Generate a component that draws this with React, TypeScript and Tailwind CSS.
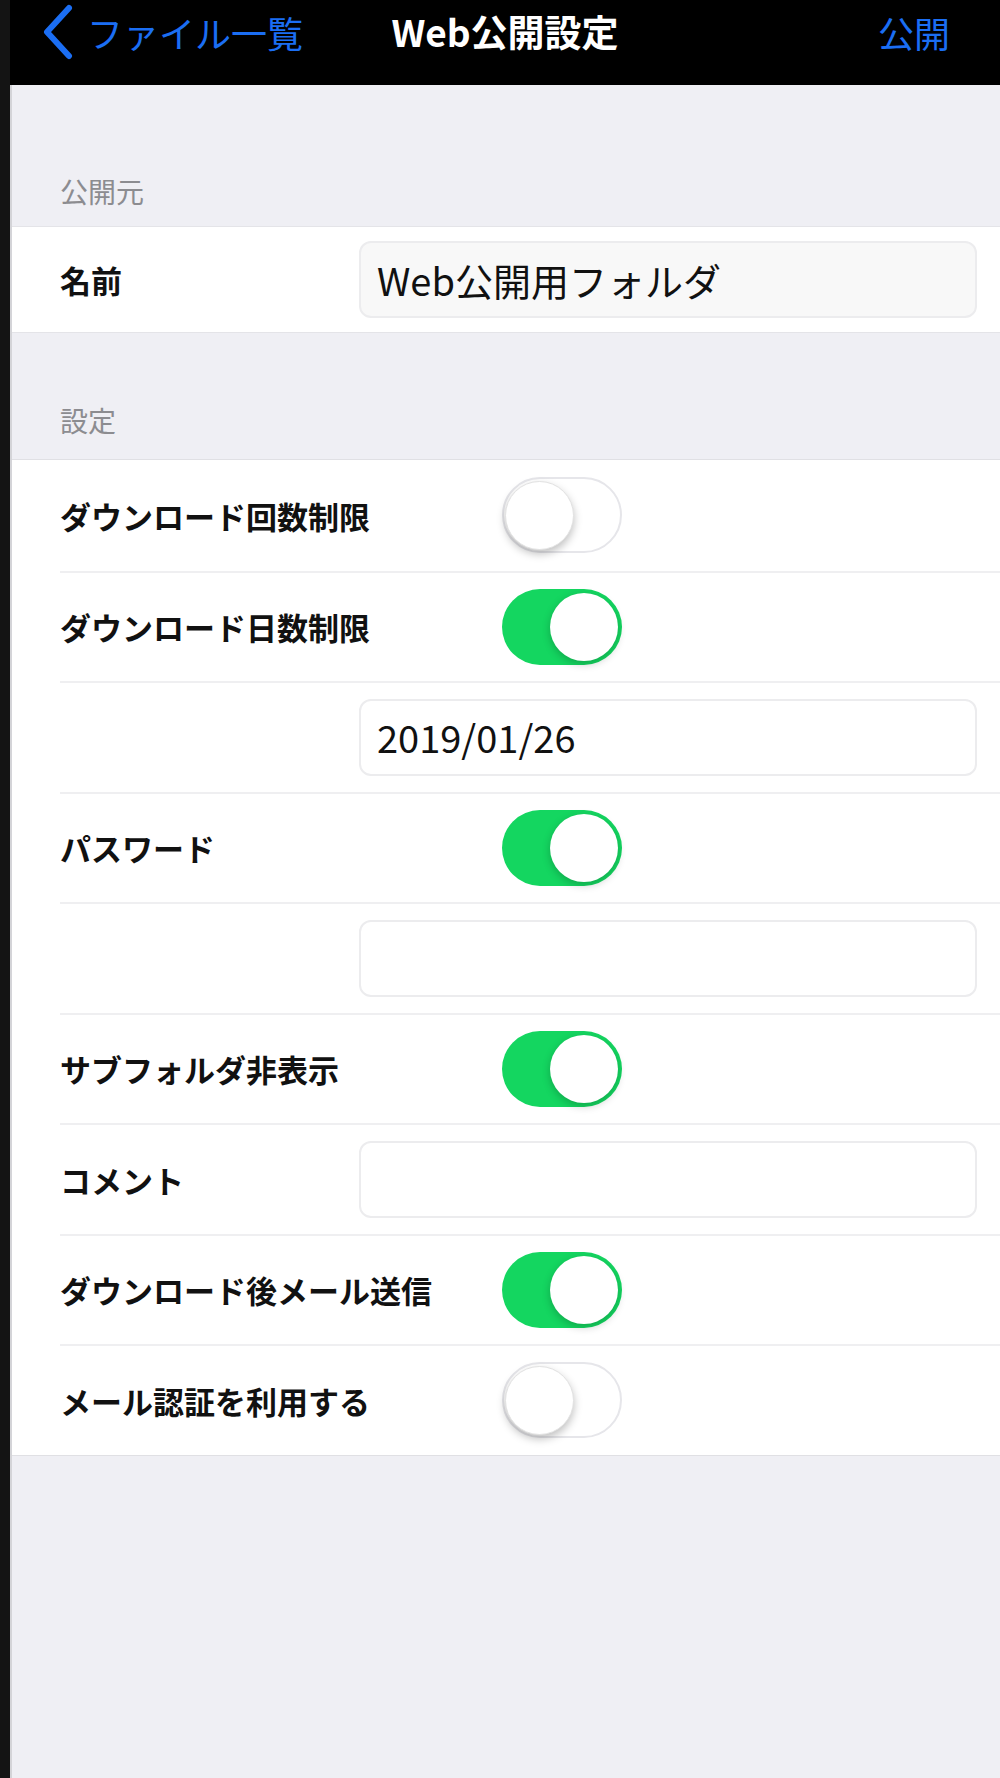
import React from 'react'

type Row =
  | { kind: 'toggle'; label: string; on: boolean }
  | { kind: 'input'; label: string; value: string }

const settingRows: Row[] = [
  { kind: 'toggle', label: 'ダウンロード回数制限', on: false },
  { kind: 'toggle', label: 'ダウンロード日数制限', on: true },
  { kind: 'input', label: '', value: '2019/01/26' },
  { kind: 'toggle', label: 'パスワード', on: true },
  { kind: 'input', label: '', value: '' },
  { kind: 'toggle', label: 'サブフォルダ非表示', on: true },
  { kind: 'input', label: 'コメント', value: '' },
  { kind: 'toggle', label: 'ダウンロード後メール送信', on: true },
  { kind: 'toggle', label: 'メール認証を利用する', on: false },
]

function Toggle({ on }: { on: boolean }) {
  if (on) {
    return (
      <div className="ml-[143px] flex h-[76px] w-[120px] items-center justify-end rounded-full bg-[#14d660] pr-[4px]">
        <div className="h-[68px] w-[68px] rounded-full bg-white shadow-[0_3px_8px_rgba(0,0,0,0.22)]" />
      </div>
    )
  }
  return (
    <div className="ml-[143px] flex h-[76px] w-[120px] items-center rounded-full border-2 border-[#e6e6ea] bg-white pl-[1px]">
      <div className="h-[69px] w-[69px] rounded-full border border-[#e2e2e2] bg-white shadow-[0_4px_9px_rgba(0,0,0,0.25)]" />
    </div>
  )
}

function TextBox({ value, filled }: { value: string; filled?: boolean }) {
  return (
    <div
      className={
        'flex h-[77px] flex-1 items-center rounded-[12px] border-2 border-[#ececee] pl-[16px] text-[38px] leading-none text-[#111] ' +
        (filled ? 'bg-[#f8f8f8]' : 'bg-white')
      }
    >
      {value}
    </div>
  )
}

export default function App() {
  return (
    <div className="flex min-h-[1778px] w-full font-['Noto_Sans_CJK_JP',sans-serif]">
      {/* left edge strip */}
      <div className="w-[10px] shrink-0 bg-[#141414]" />

      <div className="flex flex-1 flex-col bg-[#efeff4]">
        {/* nav bar */}
        <div className="grid h-[85px] grid-cols-[1fr_auto_1fr] items-center bg-black pb-[22px]">
          <div className="flex items-center pl-[31px] text-[#1b6ef3]">
            <svg width="34" height="56" viewBox="0 0 34 56" fill="none">
              <path d="M28 4 L6 28 L28 52" stroke="currentColor" strokeWidth="6" strokeLinecap="round" strokeLinejoin="round" />
            </svg>
            <span className="ml-[12px] text-[36px] leading-none">ファイル一覧</span>
          </div>
          <div className="text-[37px] font-bold leading-none text-white">Web公開設定</div>
          <div className="flex justify-end pr-[50px] text-[36px] leading-none text-[#1b6ef3]">公開</div>
        </div>

        <div className="flex flex-1 flex-col border-l-2 border-[#d4d4d8]">
          {/* 公開元 */}
          <div className="flex h-[141px] items-end pb-[21px] pl-[48px] text-[28px] leading-none text-[#8c8c90]">公開元</div>
          <div className="flex h-[107px] items-center border-y border-[#e4e4e8] bg-white pl-[48px] pr-[23px]">
            <div className="w-[299px] text-[31px] font-bold leading-none text-[#111]">名前</div>
            <TextBox value="Web公開用フォルダ" filled />
          </div>

          {/* 設定 */}
          <div className="flex h-[126px] items-end pb-[25px] pl-[48px] text-[28px] leading-none text-[#8c8c90]">設定</div>
          <div className="border-y border-[#e0e0e4] bg-white pl-[48px]">
            {settingRows.map((row, i) => (
              <div
                key={i}
                className={
                  'flex h-[110.5px] items-center pr-[23px] ' + (i > 0 ? 'border-t-2 border-[#efeff1]' : '')
                }
              >
                <div className="w-[299px] whitespace-nowrap text-[31px] font-bold leading-none text-[#111]">{row.label}</div>
                {row.kind === 'toggle' ? <Toggle on={row.on} /> : <TextBox value={row.value} />}
              </div>
            ))}
          </div>

          <div className="flex-1" />
        </div>
      </div>
    </div>
  )
}
